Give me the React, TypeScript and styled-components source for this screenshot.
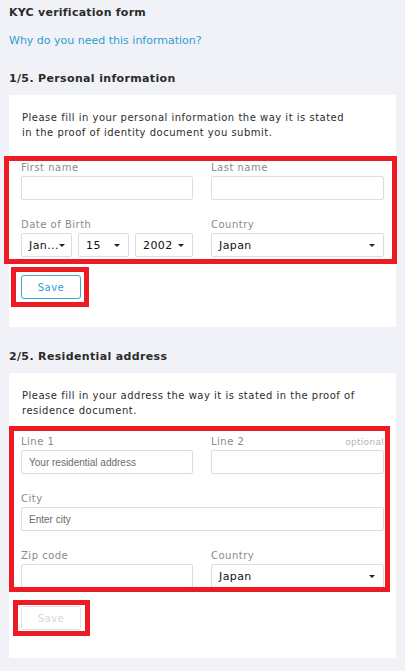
import styled, { createGlobalStyle } from "styled-components";

const GlobalStyle = createGlobalStyle`
  html, body {
    margin: 0;
    padding: 0;
    background: #f1f2f7;
  }
  body {
    font-family: "DejaVu Sans", Verdana, sans-serif;
    color: #333;
  }
  * { box-sizing: border-box; }
`;

const Page = styled.div`
  padding: 5px 9px 13px;
`;

const Title = styled.h1`
  margin: 0;
  font-size: 11px;
  line-height: 15px;
  font-weight: bold;
  letter-spacing: 0.25px;
  color: #2b2b2b;
`;

const InfoLink = styled.a`
  display: block;
  margin-top: 14px;
  font-size: 11px;
  line-height: 14px;
  color: #2a9fd1;
  text-decoration: none;
  cursor: pointer;
`;

const Section = styled.section<{ $top: number }>`
  margin-top: ${(p) => p.$top}px;
`;

const SectionTitle = styled.h2`
  margin: 0 0 9px;
  font-size: 11px;
  line-height: 15px;
  font-weight: bold;
  letter-spacing: 0.35px;
  color: #2b2b2b;
`;

const Card = styled.div`
  background: #fff;
  padding: 15px 12px 28px;
`;

const Intro = styled.p<{ $after: number }>`
  margin: 0 0 ${(p) => p.$after}px 1px;
  font-size: 10px;
  line-height: 15px;
  letter-spacing: 0.5px;
  color: #2d2d2d;
`;

const Marked = styled.div<{ $fit?: boolean }>`
  position: relative;
  width: ${(p) => (p.$fit ? "fit-content" : "auto")};
`;

const Frame = styled.span<{ $t: number; $r: number; $b: number; $l: number }>`
  position: absolute;
  top: ${(p) => p.$t}px;
  right: ${(p) => p.$r}px;
  bottom: ${(p) => p.$b}px;
  left: ${(p) => p.$l}px;
  border: 5px solid #ed1c24;
  pointer-events: none;
`;

const FieldGrid = styled.div`
  display: grid;
  grid-template-columns: 172px 1fr;
  column-gap: 18px;
  row-gap: 18px;
`;

const Field = styled.div<{ $wide?: boolean }>`
  display: flex;
  flex-direction: column;
  gap: 3px;
  grid-column: ${(p) => (p.$wide ? "1 / -1" : "auto")};
`;

const LabelRow = styled.div`
  display: flex;
  justify-content: space-between;
  align-items: baseline;
  height: 12px;
`;

const Label = styled.label`
  font-size: 10px;
  line-height: 13px;
  letter-spacing: 0.5px;
  color: #8a8a8a;
`;

const Optional = styled.span`
  font-size: 9px;
  line-height: 13px;
  letter-spacing: 0.3px;
  color: #b3b3b3;
`;

const TextInput = styled.input`
  width: 100%;
  height: 24px;
  margin: 0;
  padding: 0 7px;
  border: 1px solid #dadde8;
  border-radius: 2px;
  background: #fff;
  font-family: "Liberation Sans", Arial, sans-serif;
  font-size: 10px;
  color: #333;
  outline: none;
  &::placeholder {
    color: #6b6b6b;
  }
`;

const DateRow = styled.div`
  display: grid;
  grid-template-columns: 51px 51px 1fr;
  gap: 6px;
`;

const SelectBox = styled.div`
  display: flex;
  align-items: center;
  justify-content: space-between;
  height: 24px;
  padding: 0 8px 0 7px;
  border: 1px solid #dadde8;
  border-radius: 2px;
  background: #fff;
  font-size: 11px;
  letter-spacing: 0.4px;
  color: #111;
  white-space: nowrap;
  overflow: hidden;
`;

const Caret = styled.span`
  flex: none;
  width: 0;
  height: 0;
  border-left: 3px solid transparent;
  border-right: 3px solid transparent;
  border-top: 3px solid #222;
`;

const Actions = styled.div`
  margin-top: 18px;
`;

const SaveButton = styled.button`
  display: block;
  width: 60px;
  height: 24px;
  margin: 0;
  padding: 0;
  border: 1px solid #3da7d6;
  border-radius: 3px;
  background: #fff;
  font-family: "DejaVu Sans", Verdana, sans-serif;
  font-size: 10px;
  letter-spacing: 0.5px;
  color: #2a9fd1;
  cursor: pointer;
  &:disabled {
    border-color: #dcdfe9;
    color: #d3d6e1;
    cursor: default;
  }
`;

const Select = ({ value }: { value: string }) => (
  <SelectBox>
    <span>{value}</span>
    <Caret />
  </SelectBox>
);

export default function App() {
  return (
    <Page>
      <GlobalStyle />
      <Title>KYC verification form</Title>
      <InfoLink>Why do you need this information?</InfoLink>

      <Section $top={23}>
        <SectionTitle>1/5. Personal information</SectionTitle>
        <Card>
          <Intro $after={21}>
            Please fill in your personal information the way it is stated
            <br />
            in the proof of identity document you submit.
          </Intro>
          <Marked>
            <FieldGrid>
              <Field>
                <LabelRow>
                  <Label>First name</Label>
                </LabelRow>
                <TextInput />
              </Field>
              <Field>
                <LabelRow>
                  <Label>Last name</Label>
                </LabelRow>
                <TextInput />
              </Field>
              <Field>
                <LabelRow>
                  <Label>Date of Birth</Label>
                </LabelRow>
                <DateRow>
                  <Select value="Jan..." />
                  <Select value="15" />
                  <Select value="2002" />
                </DateRow>
              </Field>
              <Field>
                <LabelRow>
                  <Label>Country</Label>
                </LabelRow>
                <Select value="Japan" />
              </Field>
            </FieldGrid>
            <Frame $t={-5} $r={-13} $b={-7} $l={-17} />
          </Marked>
          <Actions>
            <Marked $fit>
              <SaveButton>Save</SaveButton>
              <Frame $t={-8} $r={-8} $b={-8} $l={-10} />
            </Marked>
          </Actions>
        </Card>
      </Section>

      <Section $top={22}>
        <SectionTitle>2/5. Residential address</SectionTitle>
        <Card>
          <Intro $after={17}>
            Please fill in your address the way it is stated in the proof of
            residence document.
          </Intro>
          <Marked>
            <FieldGrid>
              <Field>
                <LabelRow>
                  <Label>Line 1</Label>
                </LabelRow>
                <TextInput placeholder="Your residential address" />
              </Field>
              <Field>
                <LabelRow>
                  <Label>Line 2</Label>
                  <Optional>optional</Optional>
                </LabelRow>
                <TextInput />
              </Field>
              <Field $wide>
                <LabelRow>
                  <Label>City</Label>
                </LabelRow>
                <TextInput placeholder="Enter city" />
              </Field>
              <Field>
                <LabelRow>
                  <Label>Zip code</Label>
                </LabelRow>
                <TextInput />
              </Field>
              <Field>
                <LabelRow>
                  <Label>Country</Label>
                </LabelRow>
                <Select value="Japan" />
              </Field>
            </FieldGrid>
            <Frame $t={-9} $r={-6} $b={-4} $l={-12} />
          </Marked>
          <Actions>
            <Marked $fit>
              <SaveButton disabled>Save</SaveButton>
              <Frame $t={-6} $r={-9} $b={-6} $l={-8} />
            </Marked>
          </Actions>
        </Card>
      </Section>
    </Page>
  );
}
